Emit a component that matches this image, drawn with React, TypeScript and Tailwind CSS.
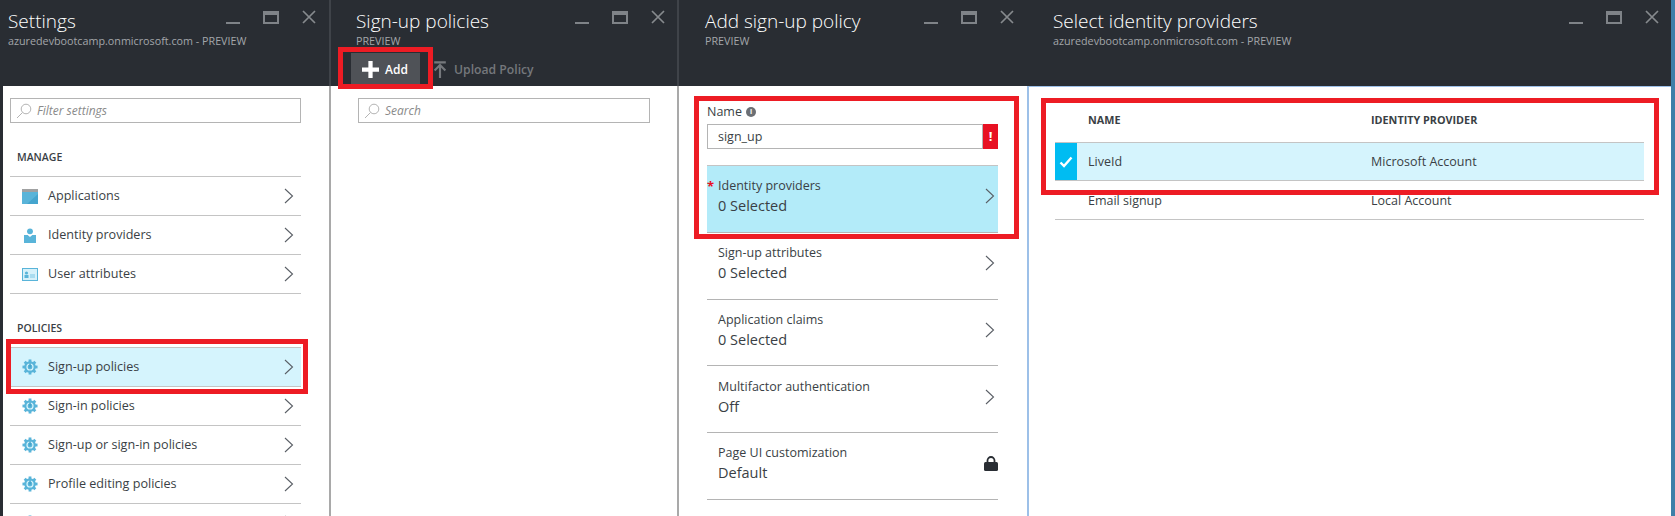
import React from "react";

const font = "font-['Open_Sans','Noto_Sans',sans-serif]";

const Chevron = ({ className = "" }: { className?: string }) => (
  <svg width="10" height="16" viewBox="0 0 10 16" fill="none" className={`shrink-0 ${className}`}>
    <path d="M1 1l7.5 7L1 15" stroke="#5a5f66" strokeWidth="1.1" />
  </svg>
);

const Gear = () => (
  <svg width="16" height="16" viewBox="0 0 17 17" className="shrink-0">
    <g fill="#59b4d9">
      <circle cx="8.5" cy="8.5" r="6.2" />
      <rect x="7" y="0.5" width="3" height="16" />
      <rect x="0.5" y="7" width="16" height="3" />
      <rect x="7" y="0.5" width="3" height="16" transform="rotate(45 8.5 8.5)" />
      <rect x="7" y="0.5" width="3" height="16" transform="rotate(-45 8.5 8.5)" />
    </g>
    <circle cx="8.5" cy="8.5" r="3.2" fill="none" stroke="#d6f4fc" strokeWidth="1.3" />
    <rect x="7.9" y="4.5" width="1.3" height="4.5" fill="#3c9ec6" />
  </svg>
);

const AppIcon = () => (
  <svg width="16" height="15" viewBox="0 0 16 15" className="shrink-0">
    <rect width="16" height="15" fill="#59b4d9" />
    <rect width="16" height="3" fill="#a0a1a2" />
    <path d="M16 5v10H5z" fill="#45a5ce" />
  </svg>
);

const PersonIcon = () => (
  <svg width="12" height="15" viewBox="0 0 13 16" className="shrink-0 ml-[2px]">
    <circle cx="6.5" cy="3.5" r="3.2" fill="#59b4d9" />
    <path d="M0 7.5h4l2.5 2 2.5-2h4V16H0z" fill="#59b4d9" />
  </svg>
);

const CardIcon = () => (
  <svg width="16" height="13" viewBox="0 0 16 13" className="shrink-0">
    <rect x="0.5" y="0.5" width="15" height="12" fill="#d6f1fa" stroke="#59b4d9" />
    <circle cx="4.5" cy="5" r="1.6" fill="#59b4d9" />
    <rect x="2.5" y="7" width="4" height="3" fill="#59b4d9" />
    <rect x="8" y="6" width="5" height="4" fill="#a9dcf0" />
  </svg>
);

const Magnifier = () => (
  <svg width="16" height="16" viewBox="0 0 16 16" fill="none" className="shrink-0">
    <circle cx="10" cy="6" r="4.8" stroke="#b4b4b4" />
    <path d="M6.5 9.5L1 15" stroke="#b4b4b4" />
  </svg>
);

const WindowButtons = () => (
  <div className="flex items-start gap-[23px]">
    <div className="mt-[22px] w-[14px] h-[2px] bg-[#7f8388]" />
    <div className="mt-[11px] w-[16px] h-[13px] border-2 border-t-[4px] border-[#7f8388]" />
    <svg width="14" height="14" viewBox="0 0 14 14" className="mt-[10px]" fill="none">
      <path d="M1 1l12 12M13 1L1 13" stroke="#868a8e" strokeWidth="1.7" />
    </svg>
  </div>
);

type BladeHeaderProps = {
  title: string;
  sub: string;
  className: string;
  buttonsClass: string;
  children?: React.ReactNode;
};

const BladeHeader = ({ title, sub, className, buttonsClass, children }: BladeHeaderProps) => (
  <div className={`h-[86px] bg-[#292d33] relative shrink-0 ${className}`}>
    <div className={`absolute top-0 ${buttonsClass}`}>
      <WindowButtons />
    </div>
    <h1 className="text-white text-[19px] font-light leading-6 pt-[9px] box-content">{title}</h1>
    <p className="text-[#a3a6aa] text-[10.75px] leading-[14px] mt-[1px]">{sub}</p>
    {children}
  </div>
);

const settingsGroups = [
  {
    label: "MANAGE",
    rows: [
      { name: "Applications", icon: <AppIcon /> },
      { name: "Identity providers", icon: <PersonIcon /> },
      { name: "User attributes", icon: <CardIcon /> },
    ],
  },
  {
    label: "POLICIES",
    rows: [
      { name: "Sign-up policies", icon: <Gear />, active: true },
      { name: "Sign-in policies", icon: <Gear /> },
      { name: "Sign-up or sign-in policies", icon: <Gear /> },
      { name: "Profile editing policies", icon: <Gear /> },
      // next row is cut off by the window, only the top of its icon shows
      { name: "", icon: <Gear /> },
    ],
  },
];

const policyRows = [
  { label: "Identity providers", value: "0 Selected", active: true, required: true },
  { label: "Sign-up attributes", value: "0 Selected" },
  { label: "Application claims", value: "0 Selected" },
  { label: "Multifactor authentication", value: "Off" },
  { label: "Page UI customization", value: "Default", locked: true },
];

const SearchBox = ({ text }: { text: string }) => (
  <div className="h-[25px] border border-[#b4b4b4] flex items-center gap-[5px] pl-[5px]">
    <Magnifier />
    <span className="italic text-[12px] text-[#8a8a8a]">{text}</span>
  </div>
);

const Highlight = ({ className }: { className: string }) => (
  <div className={`absolute border-[5px] border-[#ed1c24] pointer-events-none ${className}`} />
);

export default function App() {
  return (
    <div className={`${font} relative w-[1675px] h-[516px] overflow-hidden bg-[#292d33] flex pl-[3px] text-[#3a3f45]`}>
      {/* Settings */}
      <section className="w-[328px] shrink-0 flex flex-col">
        <BladeHeader
          title="Settings"
          sub="azuredevbootcamp.onmicrosoft.com - PREVIEW"
          className="pl-[5px] border-r-2 border-[#3f4349]"
          buttonsClass="right-[13px]"
        />
        <div className="flex-1 overflow-hidden bg-white border-r-2 border-[#a9a9a9] pl-[7px] pr-[28px] pt-[12px]">
          <SearchBox text="Filter settings" />
          {settingsGroups.map((group) => (
            <div key={group.label} className="mt-[26px]">
              <div className="text-[10.5px] font-semibold leading-[16px] pl-[7px] mb-[11px]">{group.label}</div>
              <div className="border-t border-[#c4c4c4]">
                {group.rows.map((row, i) => (
                  <div
                    key={i}
                    className={`h-[39px] flex items-center pl-[12px] pr-[7px] border-b border-[#c4c4c4] ${row.active ? "bg-[#d5f4fd]" : ""}`}
                  >
                    <div className="w-[26px] flex items-center">{row.icon}</div>
                    <span className="flex-1 text-[12.6px] pt-[1px]">{row.name}</span>
                    <Chevron className="mb-[1px]" />
                  </div>
                ))}
              </div>
            </div>
          ))}
        </div>
      </section>

      {/* Sign-up policies */}
      <section className="w-[348px] shrink-0 flex flex-col">
        <BladeHeader
          title="Sign-up policies"
          sub="PREVIEW"
          className="pl-[25px] border-r-2 border-[#3f4349]"
          buttonsClass="right-[12px]"
        >
          <div className="absolute left-[20px] bottom-0 flex items-center">
            <div className="h-[33px] w-[69px] bg-[#4f5257] flex items-center pl-[11px] gap-[6px]">
              <svg width="17" height="17" viewBox="0 0 16 16"><path d="M6 0h4v6h6v4h-6v6H6v-6H0V6h6z" fill="#fff" /></svg>
              <span className="text-white text-[12px] font-semibold pt-[1px]">Add</span>
            </div>
            <svg width="14" height="17" viewBox="0 0 15 19" className="ml-[13px]" fill="none">
              <path d="M1 1.5h13M7.5 19V5M1.5 10.5l6-6 6 6" stroke="#75787c" strokeWidth="2.4" />
            </svg>
            <span className="ml-[7px] text-[#75787c] text-[12.2px] font-semibold pt-[1px]">Upload Policy</span>
          </div>
        </BladeHeader>
        <div className="flex-1 bg-white border-r-2 border-[#a9a9a9] pl-[27px] pr-[27px] pt-[12px]">
          <SearchBox text="Search" />
        </div>
      </section>

      {/* Add sign-up policy */}
      <section className="w-[348px] shrink-0 flex flex-col">
        <BladeHeader
          title="Add sign-up policy"
          sub="PREVIEW"
          className="pl-[26px]"
          buttonsClass="right-[13px]"
        />
        <div className="flex-1 overflow-hidden bg-white pl-[28px] pr-[29px] pt-[17px]">
          <div className="flex items-center gap-[4px] text-[12.5px] leading-[18px]">
            Name
            <span className="w-[10px] h-[10px] rounded-full bg-[#6b6f74] text-white text-[7px] font-bold leading-[10px] text-center">i</span>
          </div>
          <div className="flex h-[25px] mt-[3px]">
            <div className="flex-1 border border-[#b4b4b4] pl-[10px] text-[12.5px] leading-[24px]">sign_up</div>
            <div className="w-[15px] bg-[#e81123] text-white text-[13px] font-bold text-center leading-[24px]">!</div>
          </div>
          <div className="mt-[16px] border-t border-[#c4c4c4]">
            {policyRows.map((row) => (
              <div
                key={row.label}
                className={`relative h-[66.75px] flex items-center pl-[11px] pr-[3px] border-b border-[#b4b4b4] ${row.active ? "bg-[#b3ebf9]" : ""}`}
              >
                {row.required && <span className="absolute left-0 top-[11px] text-[#e81123] text-[13px] font-bold">*</span>}
                <div className="flex-1 pb-[3px]">
                  <div className="text-[12.5px] leading-[18px]">{row.label}</div>
                  <div className="text-[14.5px] leading-[22px]">{row.value}</div>
                </div>
                {row.locked ? (
                  <svg width="14" height="15" viewBox="0 0 14 15" className="-mr-[3px] mb-[4px]">
                    <path d="M3.5 7V4.5a3.5 3.5 0 0 1 7 0V7" fill="none" stroke="#292d33" strokeWidth="1.8" />
                    <rect y="6" width="14" height="9" rx="1.5" fill="#292d33" />
                  </svg>
                ) : (
                  <Chevron className="mb-[5px]" />
                )}
              </div>
            ))}
          </div>
        </div>
      </section>

      {/* Select identity providers */}
      <section className="flex-1 flex flex-col border-r-4 border-[#3f7fa8]">
        <BladeHeader
          title="Select identity providers"
          sub="azuredevbootcamp.onmicrosoft.com - PREVIEW"
          className="pl-[26px]"
          buttonsClass="right-[12px]"
        />
        <div className="flex-1 bg-white border-l-2 border-t border-[#9dc0e8] pl-[26px] pr-[27px]">
          <div className="h-[56px] pt-[12px] flex items-center text-[10.8px] font-bold border-b border-[#c4c4c4] pl-[33px]">
            <span className="w-[283px]">NAME</span>
            <span>IDENTITY PROVIDER</span>
          </div>
          <div className="h-[38px] flex items-center bg-[#d5f4fd] border-b border-[#c4c4c4] text-[12.5px]">
            <div className="w-[22px] self-stretch bg-[#00bcf2] flex items-center justify-center">
              <svg width="14" height="12" viewBox="0 0 14 12" fill="none">
                <path d="M1.5 6.5l3.5 3.5 7.5-8.5" stroke="#fff" strokeWidth="2.4" />
              </svg>
            </div>
            <span className="w-[283px] pl-[11px] pt-[2px]">LiveId</span>
            <span className="pl-[11px] pt-[2px]">Microsoft Account</span>
          </div>
          <div className="h-[39px] pt-[2px] flex items-center border-b border-[#c4c4c4] text-[12.5px] pl-[33px]">
            <span className="w-[283px]">Email signup</span>
            <span>Local Account</span>
          </div>
        </div>
      </section>

      {/* Annotation boxes drawn over the blades */}
      <Highlight className="left-[6px] top-[339px] w-[302px] h-[55px]" />
      <Highlight className="left-[338px] top-[47px] w-[95px] h-[42px]" />
      <Highlight className="left-[694px] top-[96px] w-[325px] h-[143px]" />
      <Highlight className="left-[1041px] top-[98px] w-[618px] h-[97px]" />
    </div>
  );
}
